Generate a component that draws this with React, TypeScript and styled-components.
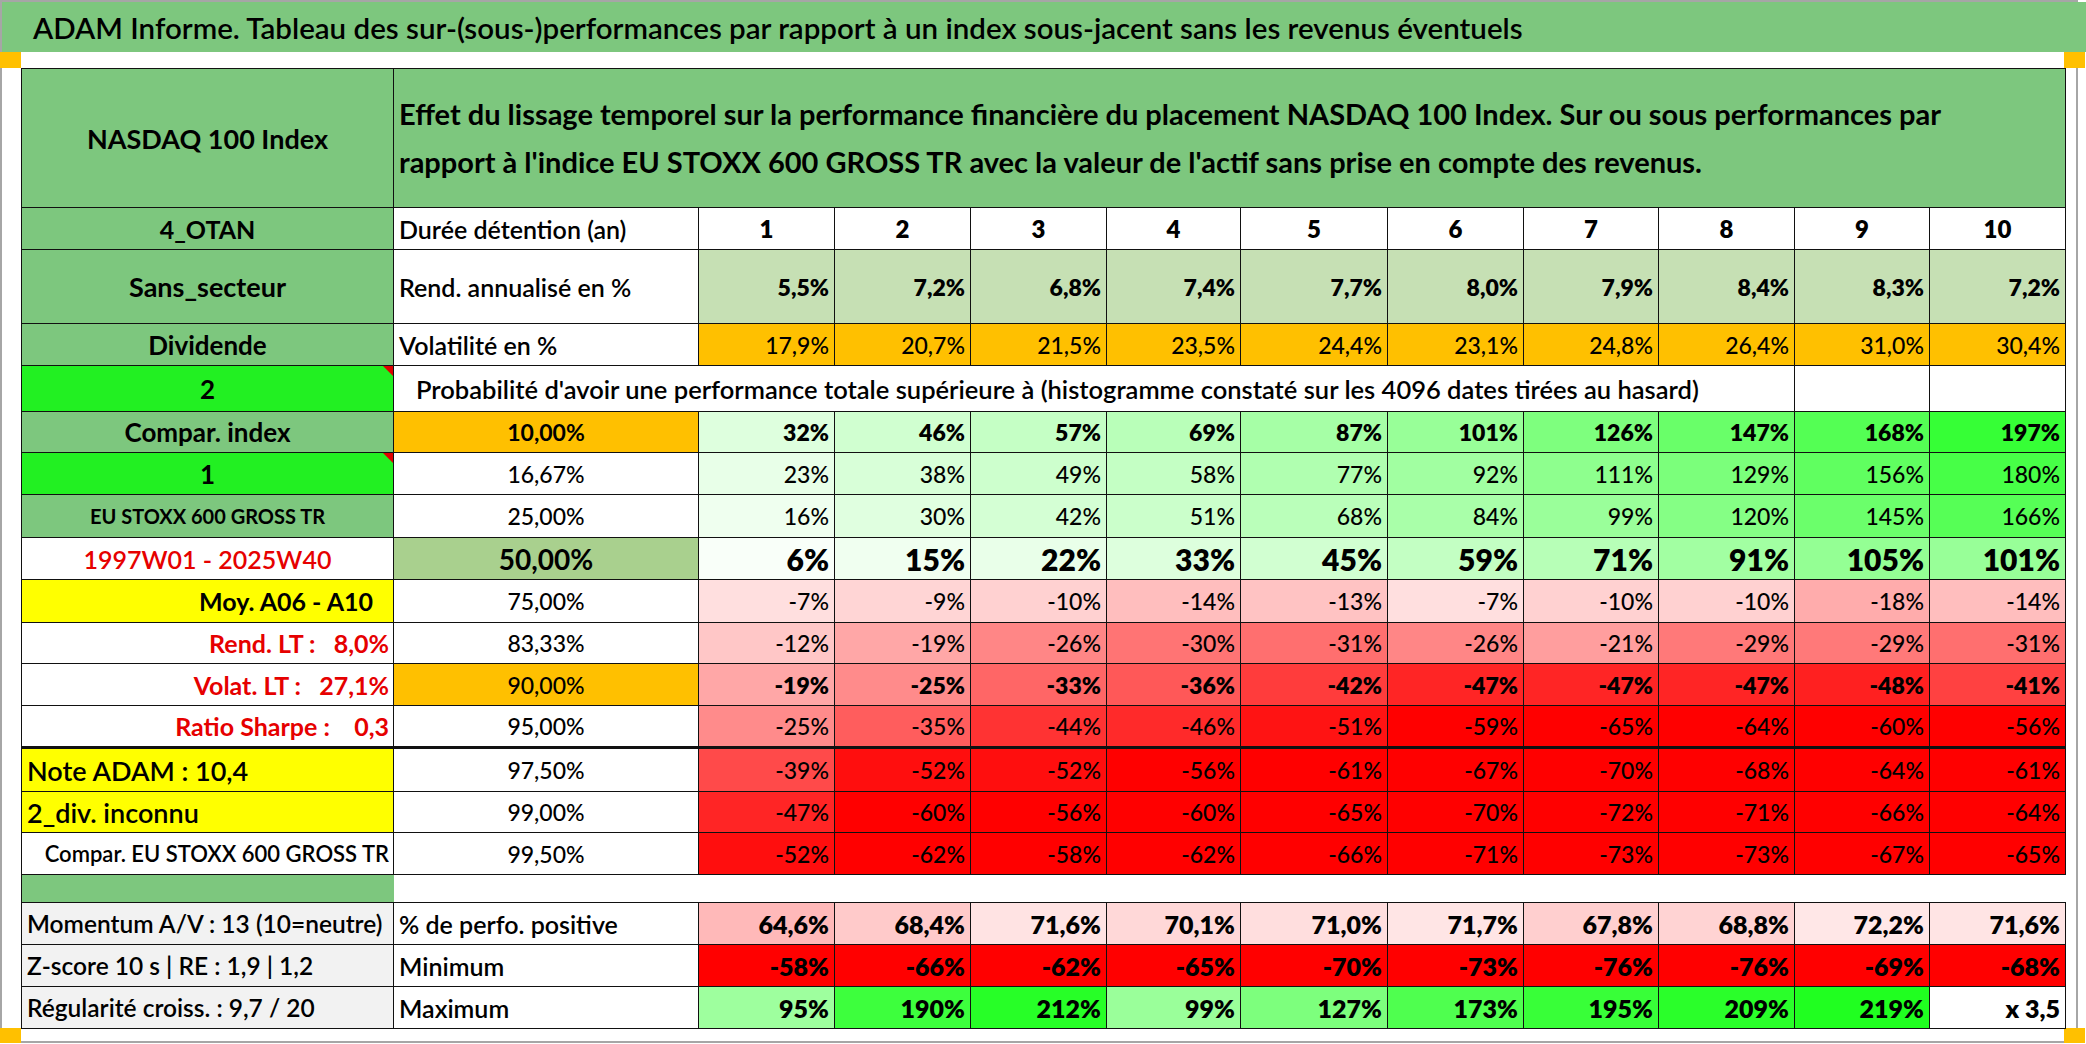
import React from 'react';
import styled, { createGlobalStyle } from 'styled-components';

const GREEN = '#7dc77e';
const BRIGHT = '#22f022';
const ORANGE = '#ffc000';
const YELLOW = '#ffff00';
const LIGHT = '#c6e0b4';
const MID = '#a9d08e';
const RED = '#e60000';
const GRAY = '#f2f2f2';

const COLS = [372, 305, 136, 136, 136, 134, 147, 136, 135, 136, 135, 136];
const ROWS = [139, 42, 74, 42, 46, 41, 42, 43, 42, 43, 41, 42, 43, 43, 41, 42, 28, 42, 42, 42];

const GlobalStyle = createGlobalStyle`
  html, body {
    margin: 0;
    padding: 0;
    background: #fff;
  }
  body {
    font-family: Lato, "Open Sans", sans-serif;
    color: #000;
  }
`;

const Frame = styled.div`
  position: relative;
  box-sizing: border-box;
  width: 2078px;
  height: 1043px;
  border: 2px solid #a6a6a6;
  background: #fff;
`;

const TitleBar = styled.div`
  height: 50px;
  margin-right: -10px;
  display: flex;
  align-items: center;
  padding-left: 31px;
  background: ${GREEN};
  font-size: 29.5px;
  font-weight: 600;
`;

const Handle = styled.div<{ $left: number; $top: number }>`
  position: absolute;
  left: ${(p) => p.$left}px;
  top: ${(p) => p.$top}px;
  width: 21px;
  height: 16px;
  background: ${ORANGE};
`;

const Grid = styled.div`
  margin: 16px 0 0 19px;
  width: 2044px;
  display: grid;
  grid-template-columns: ${COLS.map((c) => `${c}px`).join(' ')};
  grid-template-rows: ${ROWS.map((r) => `${r}px`).join(' ')};
  border-top: 1px solid #111;
  border-left: 1px solid #111;
`;

type Align = 'left' | 'center' | 'right';

const justify = (a?: Align) => (a === 'left' ? 'flex-start' : a === 'right' ? 'flex-end' : 'center');

const Cell = styled.div<{
  $bg?: string;
  $align?: Align;
  $size?: number;
  $weight?: number;
  $color?: string;
  $span?: number;
  $pad?: number;
  $thick?: boolean;
  $noRight?: boolean;
  $comment?: boolean;
}>`
  position: relative;
  box-sizing: border-box;
  grid-column: span ${(p) => p.$span || 1};
  display: flex;
  align-items: center;
  justify-content: ${(p) => justify(p.$align)};
  padding: 0 ${(p) => p.$pad ?? 5}px;
  background: ${(p) => p.$bg || '#fff'};
  color: ${(p) => p.$color || '#000'};
  font-size: ${(p) => p.$size || 23}px;
  font-weight: ${(p) => p.$weight || 500};
  white-space: pre;
  border-right: ${(p) => (p.$noRight ? 'none' : '1px solid #111')};
  border-bottom: ${(p) => (p.$thick ? 3 : 1)}px solid #111;

  &::after {
    content: '';
    display: ${(p) => (p.$comment ? 'block' : 'none')};
    position: absolute;
    top: 0;
    right: 0;
    border-top: 10px solid #e00000;
    border-left: 10px solid transparent;
  }
`;

const HeaderText = styled.div`
  font-size: 29px;
  font-weight: 700;
  line-height: 48px;
  white-space: normal;
`;

const pos = (v: number) => {
  const c = Math.round(255 * (1 - Math.min(1, v / 250)));
  return `rgb(${c},255,${c})`;
};

const neg = (v: number) => {
  const c = Math.round(255 * (1 - Math.min(1, -v / 55)));
  return `rgb(255,${c},${c})`;
};

const scale = (v: number) => (v >= 0 ? pos(v) : neg(v));

const rend = ['5,5%', '7,2%', '6,8%', '7,4%', '7,7%', '8,0%', '7,9%', '8,4%', '8,3%', '7,2%'];
const vol = ['17,9%', '20,7%', '21,5%', '23,5%', '24,4%', '23,1%', '24,8%', '26,4%', '31,0%', '30,4%'];

type ProbRow = {
  label: string;
  lBg?: string;
  lAlign?: Align;
  lColor?: string;
  lSize?: number;
  lWeight?: number;
  lPad?: number;
  comment?: boolean;
  p: string;
  pBg?: string;
  pSize?: number;
  pWeight?: number;
  vals: number[];
  size?: number;
  weight?: number;
  thick?: boolean;
};

const probRows: ProbRow[] = [
  { label: 'Compar. index', lBg: GREEN, lSize: 26, lWeight: 700, p: '10,00%', pBg: ORANGE, pWeight: 700, vals: [32, 46, 57, 69, 87, 101, 126, 147, 168, 197], weight: 800 },
  { label: '1', lBg: BRIGHT, lSize: 26, lWeight: 700, comment: true, p: '16,67%', vals: [23, 38, 49, 58, 77, 92, 111, 129, 156, 180] },
  { label: 'EU STOXX 600 GROSS TR', lBg: GREEN, lSize: 20, lWeight: 700, p: '25,00%', vals: [16, 30, 42, 51, 68, 84, 99, 120, 145, 166] },
  { label: '1997W01 - 2025W40', lColor: RED, lSize: 25, lWeight: 600, p: '50,00%', pBg: MID, pSize: 28, pWeight: 700, vals: [6, 15, 22, 33, 45, 59, 71, 91, 105, 101], size: 30, weight: 800 },
  { label: 'Moy. A06 - A10', lBg: YELLOW, lAlign: 'right', lPad: 20, lSize: 25, lWeight: 700, p: '75,00%', vals: [-7, -9, -10, -14, -13, -7, -10, -10, -18, -14] },
  { label: 'Rend. LT :   8,0%', lColor: RED, lAlign: 'right', lSize: 25, lWeight: 700, lPad: 4, p: '83,33%', vals: [-12, -19, -26, -30, -31, -26, -21, -29, -29, -31] },
  { label: 'Volat. LT :   27,1%', lColor: RED, lAlign: 'right', lSize: 25, lWeight: 700, lPad: 4, p: '90,00%', pBg: ORANGE, vals: [-19, -25, -33, -36, -42, -47, -47, -47, -48, -41], weight: 800 },
  { label: 'Ratio Sharpe :    0,3', lColor: RED, lAlign: 'right', lSize: 25, lWeight: 700, lPad: 4, p: '95,00%', vals: [-25, -35, -44, -46, -51, -59, -65, -64, -60, -56], thick: true },
  { label: 'Note ADAM : 10,4', lBg: YELLOW, lAlign: 'left', lSize: 27, lWeight: 600, p: '97,50%', vals: [-39, -52, -52, -56, -61, -67, -70, -68, -64, -61] },
  { label: '2_div. inconnu', lBg: YELLOW, lAlign: 'left', lSize: 27, lWeight: 600, p: '99,00%', vals: [-47, -60, -56, -60, -65, -70, -72, -71, -66, -64] },
  { label: 'Compar. EU STOXX 600 GROSS TR', lAlign: 'right', lSize: 22, lWeight: 600, lPad: 4, p: '99,50%', vals: [-52, -62, -58, -62, -66, -71, -73, -73, -67, -65] },
];

const positive = [
  ['64,6%', '#ffb9b9'],
  ['68,4%', '#ffcaca'],
  ['71,6%', '#ffe3e3'],
  ['70,1%', '#ffd8d8'],
  ['71,0%', '#ffdede'],
  ['71,7%', '#ffe5e5'],
  ['67,8%', '#ffcfcf'],
  ['68,8%', '#ffd3d3'],
  ['72,2%', '#ffe7e7'],
  ['71,6%', '#ffe4e4'],
];
const minimum = ['-58%', '-66%', '-62%', '-65%', '-70%', '-73%', '-76%', '-76%', '-69%', '-68%'];
const maximum = [95, 190, 212, 99, 127, 173, 195, 209, 219];

export default function App() {
  return (
    <>
      <GlobalStyle />
      <Frame>
        <TitleBar>
          ADAM Informe. Tableau des sur-(sous-)performances par rapport à un index sous-jacent sans les revenus éventuels
        </TitleBar>
        <Handle $left={-2} $top={50} />
        <Handle $left={2062} $top={50} />
        <Handle $left={-2} $top={1026} />
        <Handle $left={2062} $top={1026} />

        <Grid>
          <Cell $bg={GREEN} $size={27} $weight={700}>NASDAQ 100 Index</Cell>
          <Cell $bg={GREEN} $span={11} $align="left">
            <HeaderText>
              Effet du lissage temporel sur la performance financière du placement NASDAQ 100 Index. Sur ou sous performances par
              <br />
              rapport à l&apos;indice EU STOXX 600 GROSS TR avec la valeur de l&apos;actif sans prise en compte des revenus.
            </HeaderText>
          </Cell>

          <Cell $bg={GREEN} $size={25} $weight={700}>4_OTAN</Cell>
          <Cell $align="left" $size={25} $weight={600}>Durée détention (an)</Cell>
          {Array.from({ length: 10 }, (_, i) => (
            <Cell key={`y${i}`} $size={24} $weight={800}>{i + 1}</Cell>
          ))}

          <Cell $bg={GREEN} $size={27} $weight={700}>Sans_secteur</Cell>
          <Cell $align="left" $size={25} $weight={600}>Rend. annualisé en %</Cell>
          {rend.map((r, i) => (
            <Cell key={`r${i}`} $bg={LIGHT} $align="right" $size={23} $weight={800}>{r}</Cell>
          ))}

          <Cell $bg={GREEN} $size={26} $weight={700}>Dividende</Cell>
          <Cell $align="left" $size={25} $weight={600}>Volatilité en %</Cell>
          {vol.map((r, i) => (
            <Cell key={`v${i}`} $bg={ORANGE} $align="right" $size={23}>{r}</Cell>
          ))}

          <Cell $bg={BRIGHT} $size={26} $weight={700} $comment>2</Cell>
          <Cell $span={9} $align="left" $pad={22} $size={25.5} $weight={600}>
            Probabilité d&apos;avoir une performance totale supérieure à (histogramme constaté sur les 4096 dates tirées au hasard)
          </Cell>
          <Cell />
          <Cell />

          {probRows.map((row, ri) => (
            <React.Fragment key={`p${ri}`}>
              <Cell
                $bg={row.lBg}
                $align={row.lAlign}
                $color={row.lColor}
                $size={row.lSize}
                $weight={row.lWeight}
                $pad={row.lPad}
                $comment={row.comment}
                $thick={row.thick}
              >
                {row.label}
              </Cell>
              <Cell $bg={row.pBg} $size={row.pSize || 23} $weight={row.pWeight || 500} $thick={row.thick}>
                {row.p}
              </Cell>
              {row.vals.map((v, i) => (
                <Cell
                  key={`p${ri}-${i}`}
                  $bg={scale(v)}
                  $align="right"
                  $size={row.size || 23}
                  $weight={row.weight || 500}
                  $thick={row.thick}
                >
                  {`${v}%`}
                </Cell>
              ))}
            </React.Fragment>
          ))}

          <Cell $bg={GREEN} $noRight />
          <Cell $span={11} $noRight />

          <Cell $bg={GRAY} $align="left" $size={24.5} $weight={600}>Momentum A/V : 13 (10=neutre)</Cell>
          <Cell $align="left" $size={25} $weight={600}>% de perfo. positive</Cell>
          {positive.map(([t, c], i) => (
            <Cell key={`pp${i}`} $bg={c} $align="right" $size={25} $weight={800}>{t}</Cell>
          ))}

          <Cell $bg={GRAY} $align="left" $size={24.5} $weight={600}>Z-score 10 s | RE : 1,9 | 1,2</Cell>
          <Cell $align="left" $size={25} $weight={600}>Minimum</Cell>
          {minimum.map((t, i) => (
            <Cell key={`mn${i}`} $bg="#ff0000" $align="right" $size={25} $weight={800}>{t}</Cell>
          ))}

          <Cell $bg={GRAY} $align="left" $size={24.5} $weight={600}>Régularité croiss. : 9,7 / 20</Cell>
          <Cell $align="left" $size={25} $weight={600}>Maximum</Cell>
          {maximum.map((v, i) => (
            <Cell key={`mx${i}`} $bg={pos(v)} $align="right" $size={25} $weight={800}>{`${v}%`}</Cell>
          ))}
          <Cell $align="right" $size={25} $weight={800}>x 3,5</Cell>
        </Grid>
      </Frame>
    </>
  );
}
